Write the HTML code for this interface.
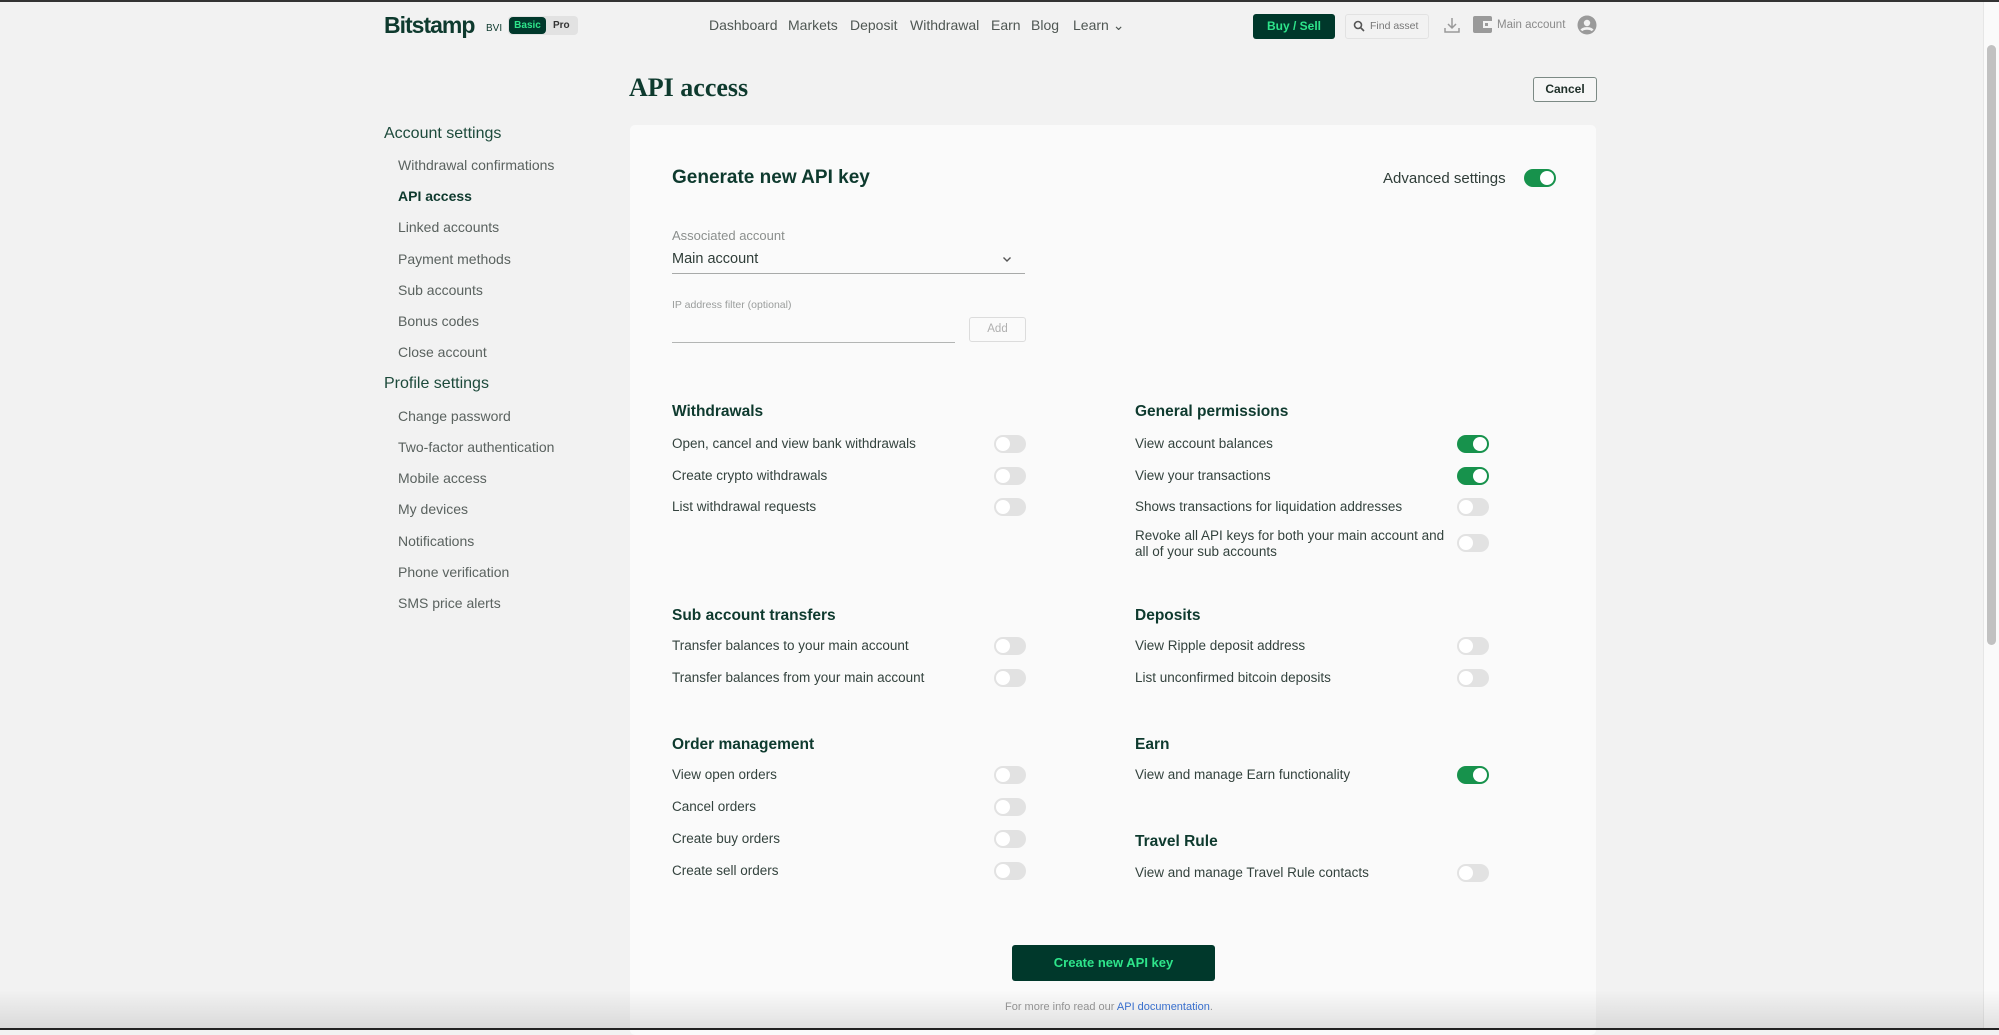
<!DOCTYPE html>
<html><head><meta charset="utf-8"><style>
*{margin:0;padding:0;box-sizing:border-box}
body{width:1999px;height:1030px;overflow:hidden;background:#f2f2f2;font-family:"Liberation Sans",sans-serif;color:#2f3d38;position:relative}
.a{position:absolute;white-space:nowrap}
.t{height:20px;line-height:20px;font-size:13.5px;color:#33423d}
.h{height:22px;line-height:22px;font-size:15.5px;font-weight:bold;color:#0e3a2e}
.sb{font-size:14px;color:#5a625f;height:20px;line-height:20px}
.tg{position:absolute;width:32px;height:18px;border-radius:9px;background:#e2e2e2}
.tg::after{content:"";position:absolute;left:2px;top:2px;width:14px;height:14px;border-radius:50%;background:#fff}
.tg.on{background:#17924c}
.tg.on::after{left:16px}
.nav{font-size:14px;color:#4f5753;top:15px;height:20px;line-height:20px}
</style></head><body>
<div class="a" style="left:0;top:0;width:1999px;height:2px;background:#333"></div>
<!-- header -->
<div class="a" style="left:384px;top:11px;font-size:23px;font-weight:bold;color:#0e3a2e;letter-spacing:-1px;height:28px;line-height:28px">Bitstamp</div>
<div class="a" style="left:486px;top:23px;font-size:10px;color:#0e3a2e">BVI</div>
<div class="a" style="left:508px;top:16px;width:70px;height:19px;border-radius:4px;background:#e2e2e2"></div>
<div class="a" style="left:509px;top:17px;width:37px;height:17px;border-radius:4px;background:#00382b;color:#2ee58b;font-size:10px;font-weight:bold;text-align:center;line-height:17px">Basic</div>
<div class="a" style="left:553px;top:17px;font-size:10px;font-weight:bold;color:#333;line-height:17px">Pro</div>
<div class="a nav" style="left:709px">Dashboard</div>
<div class="a nav" style="left:788px">Markets</div>
<div class="a nav" style="left:850px">Deposit</div>
<div class="a nav" style="left:910px">Withdrawal</div>
<div class="a nav" style="left:991px">Earn</div>
<div class="a nav" style="left:1031px">Blog</div>
<div class="a nav" style="left:1073px">Learn ⌄</div>
<div class="a" style="left:1253px;top:14px;width:82px;height:25px;border-radius:3px;background:#00382b;color:#2ee58b;font-size:12px;font-weight:bold;text-align:center;line-height:25px">Buy / Sell</div>
<div class="a" style="left:1345px;top:14px;width:84px;height:25px;border-radius:3px;border:1px solid #e2e2e2;color:#777;font-size:10.5px;line-height:23px;padding-left:24px">Find asset</div>
<svg class="a" style="left:1353px;top:20px" width="12" height="12" viewBox="0 0 12 12"><circle cx="5" cy="5" r="3.5" fill="none" stroke="#555" stroke-width="1.6"/><path d="M7.5 7.5L11 11" stroke="#555" stroke-width="1.6"/></svg>
<svg class="a" style="left:1442px;top:15px" width="20" height="20" viewBox="0 0 20 20" fill="none" stroke="#999" stroke-width="1.5"><path d="M10 3v10M6 9l4 4 4-4M3 13v4h14v-4"/></svg>
<svg class="a" style="left:1473px;top:16px" width="19" height="17" viewBox="0 0 19 17"><rect x="0" y="0" width="19" height="17" rx="2" fill="#9a9a9a"/><rect x="10" y="5" width="9" height="7" fill="#f2f2f2"/><rect x="12" y="7" width="3" height="3" fill="#9a9a9a"/></svg>
<div class="a" style="left:1497px;top:15px;font-size:11.5px;color:#8a8a8a;line-height:20px">Main account</div>
<svg class="a" style="left:1577px;top:15px" width="20" height="20" viewBox="0 0 20 20"><circle cx="10" cy="10" r="9.5" fill="#9a9a9a"/><circle cx="10" cy="8" r="3.2" fill="#f2f2f2"/><path d="M4.5 15.5c1.5-2.8 9.5-2.8 11 0" stroke="#f2f2f2" stroke-width="2.6" fill="none"/></svg>
<!-- title -->
<div class="a" style="left:629px;top:71px;font-family:'Liberation Serif',serif;font-size:26px;font-weight:bold;color:#0e3a2e;line-height:34px">API access</div>
<div class="a" style="left:1533px;top:77px;width:64px;height:25px;border:1px solid #7c8a85;border-radius:3px;font-size:12px;font-weight:bold;color:#20302a;text-align:center;line-height:23px;background:#f6f6f6">Cancel</div>
<!-- sidebar -->
<div class="a" style="left:384px;top:123px;font-size:16px;color:#1d4a3b;height:22px;line-height:22px">Account settings</div>
<div class="a sb" style="left:398px;top:155px">Withdrawal confirmations</div>
<div class="a sb" style="left:398px;top:186px;font-weight:bold;color:#0e3a2e">API access</div>
<div class="a sb" style="left:398px;top:217px">Linked accounts</div>
<div class="a sb" style="left:398px;top:249px">Payment methods</div>
<div class="a sb" style="left:398px;top:280px">Sub accounts</div>
<div class="a sb" style="left:398px;top:311px">Bonus codes</div>
<div class="a sb" style="left:398px;top:342px">Close account</div>
<div class="a" style="left:384px;top:373px;font-size:16px;color:#1d4a3b;height:22px;line-height:22px">Profile settings</div>
<div class="a sb" style="left:398px;top:406px">Change password</div>
<div class="a sb" style="left:398px;top:437px">Two-factor authentication</div>
<div class="a sb" style="left:398px;top:468px">Mobile access</div>
<div class="a sb" style="left:398px;top:499px">My devices</div>
<div class="a sb" style="left:398px;top:531px">Notifications</div>
<div class="a sb" style="left:398px;top:562px">Phone verification</div>
<div class="a sb" style="left:398px;top:593px">SMS price alerts</div>
<!-- card -->
<div class="a" style="left:630px;top:125px;width:966px;height:910px;background:#fafafa;border-radius:5px"></div>
<div class="a" style="left:672px;top:165px;font-size:19px;font-weight:bold;color:#0e3a2e;line-height:26px">Generate new API key</div>
<div class="a" style="left:1383px;top:168px;font-size:15px;color:#2f3d38;line-height:22px">Advanced settings</div>
<div class="tg on" style="left:1524px;top:169px"></div>
<div class="a" style="left:672px;top:227px;font-size:13px;color:#8b8f8d;line-height:18px">Associated account</div>
<div class="a" style="left:672px;top:249px;font-size:14.5px;color:#2f3d38;line-height:20px">Main account</div>
<svg class="a" style="left:1002px;top:256px" width="10" height="7" viewBox="0 0 10 7"><path d="M1.5 1.5L5 5l3.5-3.5" fill="none" stroke="#555" stroke-width="1.4"/></svg>
<div class="a" style="left:672px;top:273px;width:353px;height:1px;background:#a8aaa9"></div>
<div class="a" style="left:672px;top:297px;font-size:10.5px;color:#9a9d9c;line-height:16px">IP address filter (optional)</div>
<div class="a" style="left:672px;top:342px;width:283px;height:1px;background:#b3b5b4"></div>
<div class="a" style="left:969px;top:317px;width:57px;height:25px;border:1px solid #dcdcdc;border-radius:3px;font-size:11.5px;color:#b0b0b0;text-align:center;line-height:23px">Add</div>
<!-- left col -->
<div class="a h" style="left:672px;top:401px">Withdrawals</div>
<div class="a t" style="left:672px;top:434px">Open, cancel and view bank withdrawals</div><div class="tg" style="left:994px;top:435px"></div>
<div class="a t" style="left:672px;top:466px">Create crypto withdrawals</div><div class="tg" style="left:994px;top:467px"></div>
<div class="a t" style="left:672px;top:497px">List withdrawal requests</div><div class="tg" style="left:994px;top:498px"></div>
<div class="a h" style="left:672px;top:605px">Sub account transfers</div>
<div class="a t" style="left:672px;top:636px">Transfer balances to your main account</div><div class="tg" style="left:994px;top:637px"></div>
<div class="a t" style="left:672px;top:668px">Transfer balances from your main account</div><div class="tg" style="left:994px;top:669px"></div>
<div class="a h" style="left:672px;top:734px">Order management</div>
<div class="a t" style="left:672px;top:765px">View open orders</div><div class="tg" style="left:994px;top:766px"></div>
<div class="a t" style="left:672px;top:797px">Cancel orders</div><div class="tg" style="left:994px;top:798px"></div>
<div class="a t" style="left:672px;top:829px">Create buy orders</div><div class="tg" style="left:994px;top:830px"></div>
<div class="a t" style="left:672px;top:861px">Create sell orders</div><div class="tg" style="left:994px;top:862px"></div>
<!-- right col -->
<div class="a h" style="left:1135px;top:401px">General permissions</div>
<div class="a t" style="left:1135px;top:434px">View account balances</div><div class="tg on" style="left:1457px;top:435px"></div>
<div class="a t" style="left:1135px;top:466px">View your transactions</div><div class="tg on" style="left:1457px;top:467px"></div>
<div class="a t" style="left:1135px;top:497px">Shows transactions for liquidation addresses</div><div class="tg" style="left:1457px;top:498px"></div>
<div class="a t" style="left:1135px;top:528px;line-height:16px;height:34px">Revoke all API keys for both your main account and<br>all of your sub accounts</div><div class="tg" style="left:1457px;top:534px"></div>
<div class="a h" style="left:1135px;top:605px">Deposits</div>
<div class="a t" style="left:1135px;top:636px">View Ripple deposit address</div><div class="tg" style="left:1457px;top:637px"></div>
<div class="a t" style="left:1135px;top:668px">List unconfirmed bitcoin deposits</div><div class="tg" style="left:1457px;top:669px"></div>
<div class="a h" style="left:1135px;top:734px">Earn</div>
<div class="a t" style="left:1135px;top:765px">View and manage Earn functionality</div><div class="tg on" style="left:1457px;top:766px"></div>
<div class="a h" style="left:1135px;top:831px">Travel Rule</div>
<div class="a t" style="left:1135px;top:863px">View and manage Travel Rule contacts</div><div class="tg" style="left:1457px;top:864px"></div>
<div class="a" style="left:1012px;top:945px;width:203px;height:36px;border-radius:3px;background:#00382b;color:#2ee58b;font-size:13px;font-weight:bold;text-align:center;line-height:36px">Create new API key</div>
<div class="a" style="left:1005px;top:999px;font-size:11px;color:#999;line-height:16px">For more info read our <span style="color:#3b74d6">API documentation</span>.</div>
<!-- scrollbar -->
<div class="a" style="left:1983px;top:2px;width:16px;height:1028px;background:#fafafa;border-left:1px solid #e6e6e6"></div>
<div class="a" style="left:1987px;top:45px;width:9px;height:600px;border-radius:5px;background:#c1c1c1"></div>
<!-- bottom shade -->
<div class="a" style="left:0;top:990px;width:1999px;height:38px;background:linear-gradient(rgba(0,0,0,0),rgba(0,0,0,0.1))"></div>
<div class="a" style="left:0;top:1028px;width:1999px;height:2px;background:#222"></div>
</body></html>
